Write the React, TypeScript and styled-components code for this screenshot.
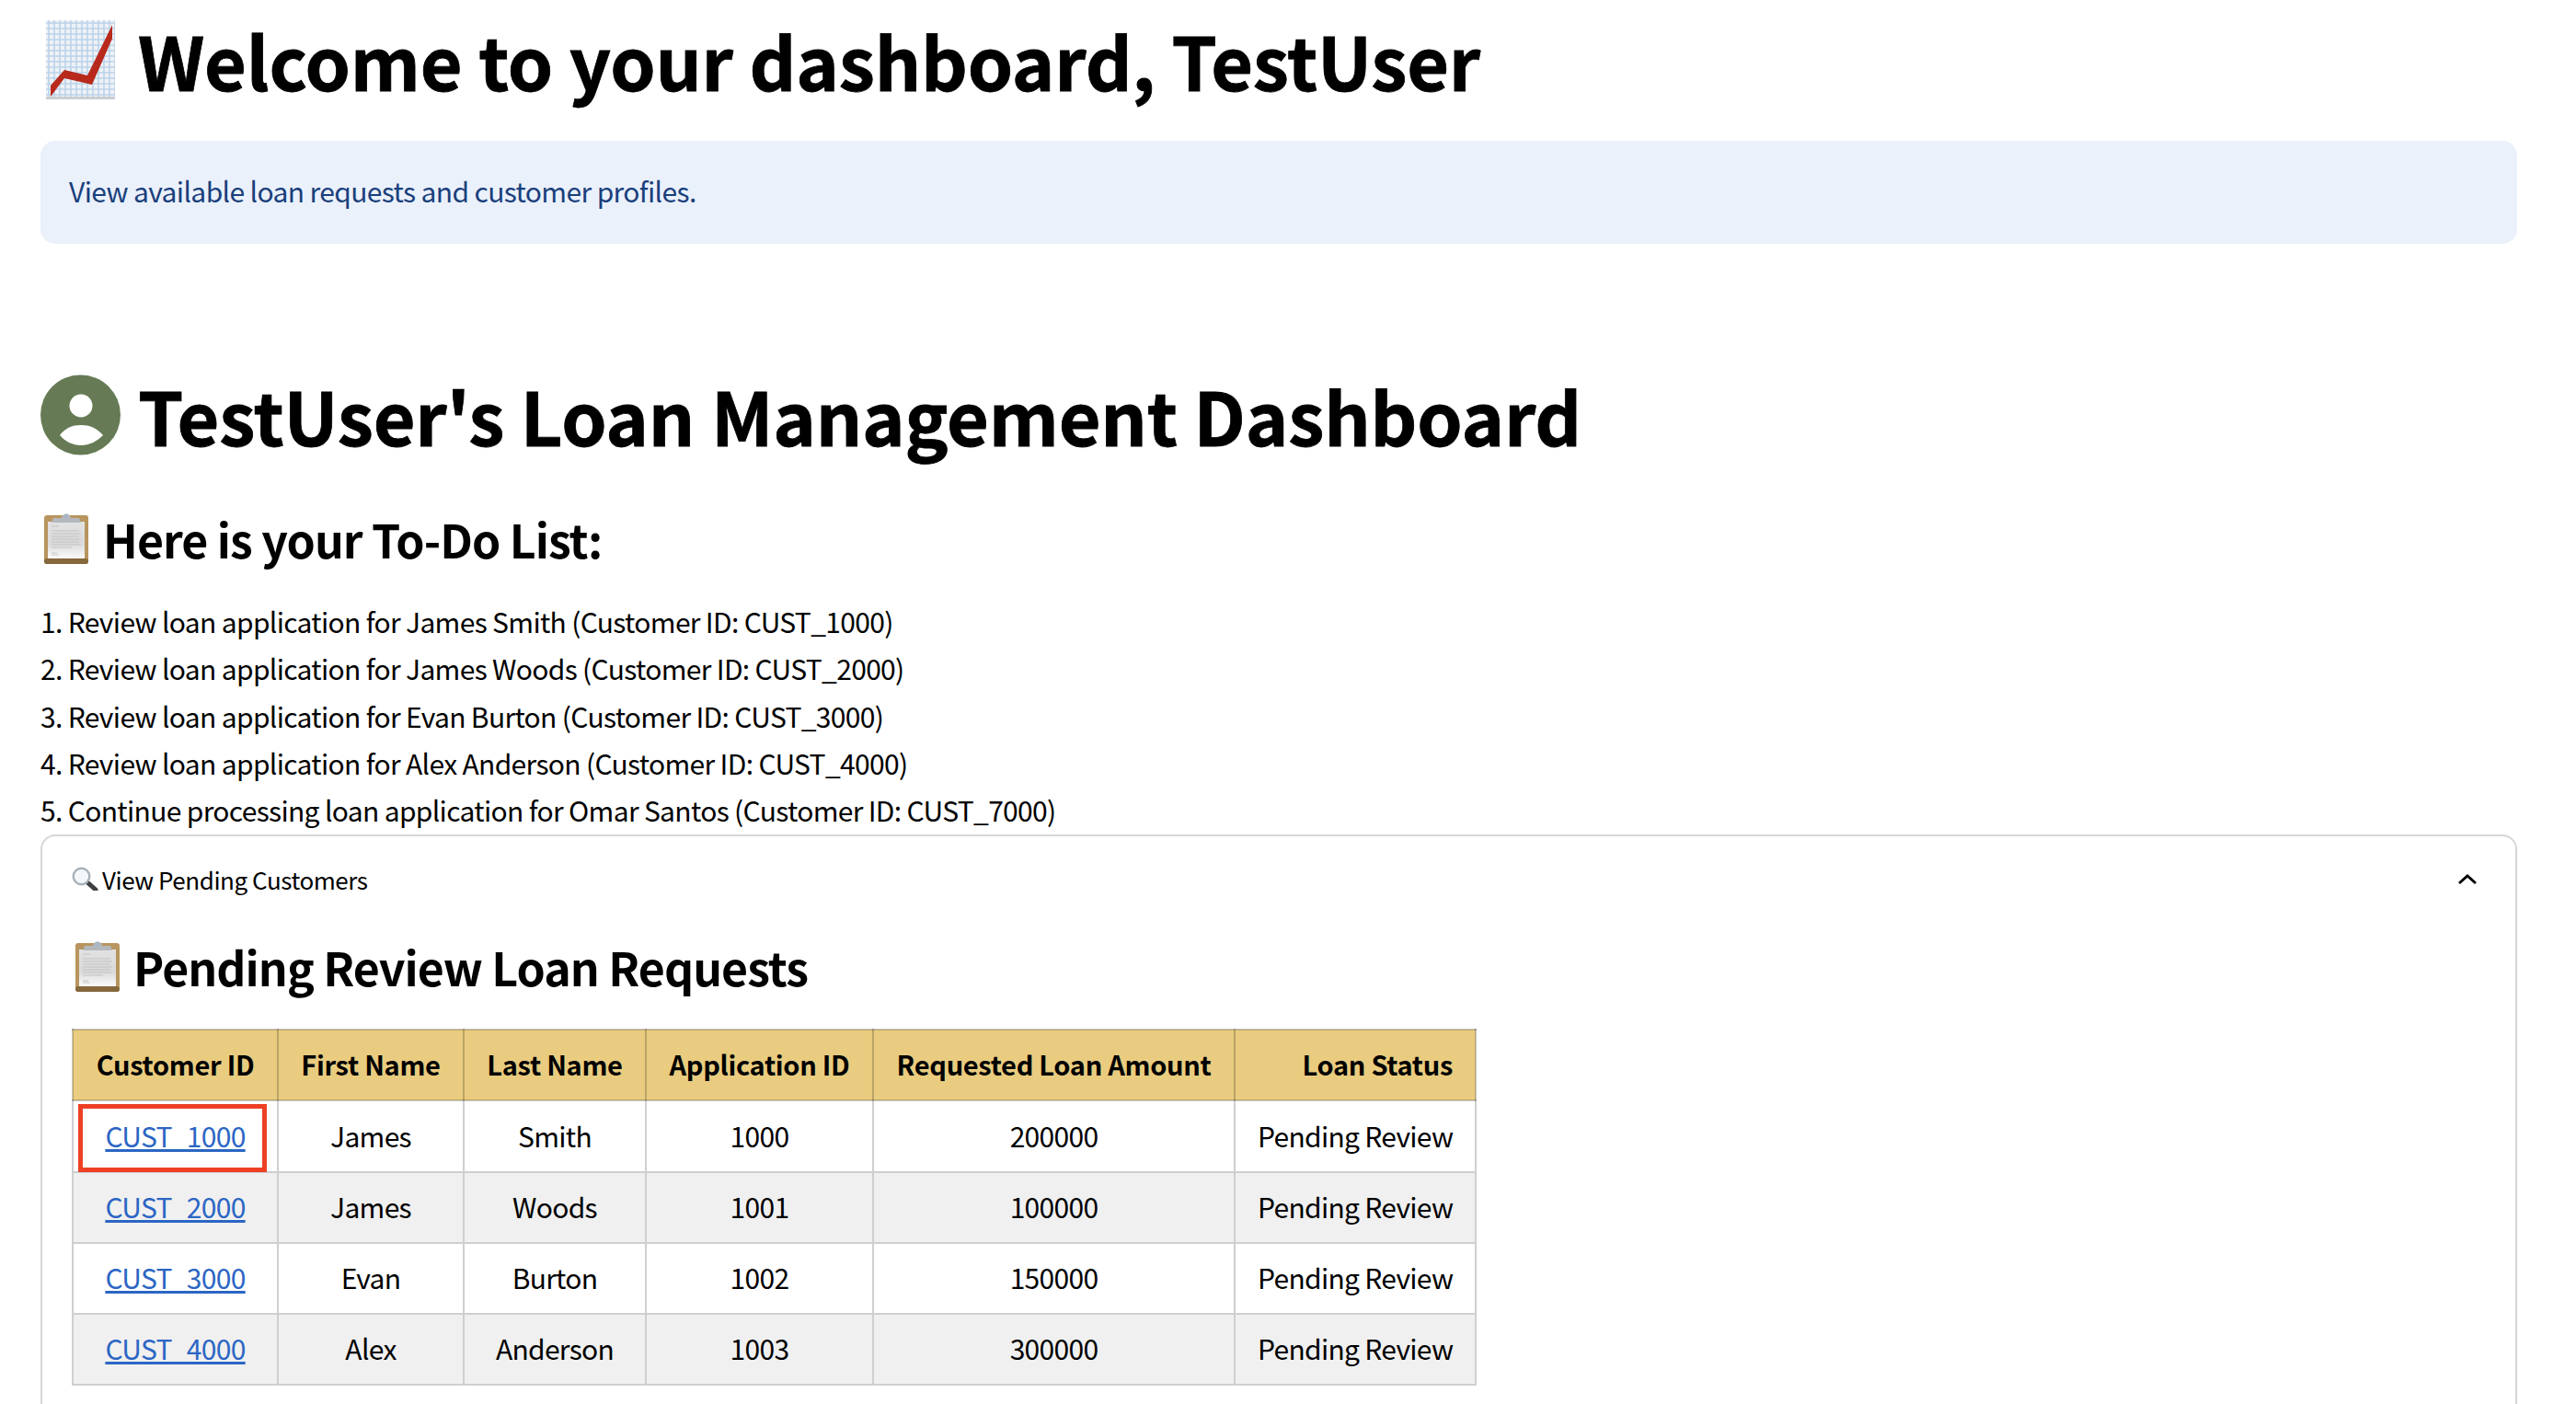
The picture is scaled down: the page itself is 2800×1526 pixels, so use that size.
import styled, { createGlobalStyle } from "styled-components";

const customers = [
  { id: "CUST_1000", first: "James", last: "Smith", app: 1000, amount: 200000 },
  { id: "CUST_2000", first: "James", last: "Woods", app: 1001, amount: 100000 },
  { id: "CUST_3000", first: "Evan", last: "Burton", app: 1002, amount: 150000 },
  { id: "CUST_4000", first: "Alex", last: "Anderson", app: 1003, amount: 300000 },
];

const todos = [
  "Review loan application for James Smith (Customer ID: CUST_1000)",
  "Review loan application for James Woods (Customer ID: CUST_2000)",
  "Review loan application for Evan Burton (Customer ID: CUST_3000)",
  "Review loan application for Alex Anderson (Customer ID: CUST_4000)",
  "Continue processing loan application for Omar Santos (Customer ID: CUST_7000)",
];

const GlobalStyle = createGlobalStyle`
  html, body {
    margin: 0;
    height: 1526px;
    overflow: hidden;
    background: #fff;
  }
  body {
    font-family: "Noto Sans CJK JP", "Noto Sans", sans-serif;
    color: #000;
  }
`;

const Page = styled.main`
  padding: 0 64px 0 44px;
`;

const Title = styled.h1<{ $top: number }>`
  display: flex;
  align-items: center;
  margin: ${(p) => p.$top}px 0 0;
  height: 88px;
  font-size: 79px;
  line-height: 88px;
  font-weight: 700;
  letter-spacing: -0.2px;
  -webkit-text-stroke: 0.8px #000;
  white-space: nowrap;
`;

const SubTitle = styled.h2<{ $top: number; $left: number }>`
  display: flex;
  align-items: center;
  margin: ${(p) => p.$top}px 0 0;
  padding-left: ${(p) => p.$left}px;
  height: 56px;
  font-size: 50px;
  line-height: 56px;
  font-weight: 700;
  letter-spacing: -0.95px;
  white-space: nowrap;
`;

const Notice = styled.div`
  display: flex;
  align-items: center;
  margin-top: 44px;
  height: 112px;
  box-sizing: border-box;
  padding: 0 0 4px 31px;
  border-radius: 16px;
  background: #eaf1fb;
  color: #1a3f7c;
  font-size: 30px;
  letter-spacing: -0.62px;
`;

const TodoList = styled.ol`
  list-style: none;
  margin: 37px 0 0;
  padding: 0;
  font-size: 30px;
  line-height: 51.3px;
  letter-spacing: -0.67px;
`;

const Expander = styled.section`
  margin-top: 1px;
  height: 800px;
  border: 2px solid #d6d6d8;
  border-radius: 16px;
  padding: 0 32px;
`;

const ExpanderHead = styled.div`
  display: flex;
  align-items: center;
  height: 92px;
  padding-bottom: 4px;
  font-size: 26px;
  letter-spacing: -0.45px;
`;

const Chevron = styled.svg`
  margin-left: auto;
  margin-right: 9px;
`;

const Table = styled.table`
  border-collapse: collapse;
  table-layout: fixed;
  margin-top: 40px;
  width: 1525px;
  font-size: 30px;
  letter-spacing: -0.7px;

  tbody tr:first-child td {
    height: 78px;
  }
`;

const HeadCell = styled.th<{ $width: number; $align?: string }>`
  width: ${(p) => p.$width}px;
  height: 77px;
  padding: 0 24px 3px;
  box-sizing: border-box;
  background: #e9cc7f;
  border: 2px solid rgba(0, 0, 0, 0.2);
  font-weight: 700;
  font-size: 29px;
  letter-spacing: -0.3px;
  text-align: ${(p) => p.$align || "center"};
  white-space: nowrap;
`;

const Row = styled.tr<{ $striped: boolean }>`
  background: ${(p) => (p.$striped ? "#f0f0f0" : "#fff")};
`;

const Cell = styled.td<{ $align?: string }>`
  position: relative;
  height: 77px;
  padding: 0 24px 3px;
  box-sizing: border-box;
  border: 2px solid #cfcfd1;
  text-align: ${(p) => p.$align || "center"};
  white-space: nowrap;
`;

const CustomerLink = styled.a`
  color: #2b66c4;
  text-decoration: underline;
`;

const Highlight = styled.span`
  position: absolute;
  left: 5px;
  top: 3px;
  width: 205px;
  height: 74px;
  box-sizing: border-box;
  border: 5px solid #ee4024;
`;

const ChartEmoji = () => (
  <svg width="75" height="86" viewBox="0 0 75 86" style={{ margin: "0 25px 0 6px", flex: "none" }}>
    <defs>
      <pattern id="graph" width="6" height="6" patternUnits="userSpaceOnUse">
        <rect width="6" height="6" fill="#eef2f6" />
        <path d="M3 0V6M0 3H6" stroke="#bcd3ea" strokeWidth="1.6" />
      </pattern>
    </defs>
    <rect width="75" height="86" fill="url(#graph)" />
    <rect y="83" width="75" height="3" fill="#c9ced4" />
    <path d="M72 5L72 20L50 70L20 63L5 83L5 71L20 54L45 60Z" fill="#b8291c" />
  </svg>
);

const UserIcon = () => (
  <svg width="87" height="88" viewBox="0 0 87 88" style={{ marginRight: 19, flex: "none" }}>
    <circle cx="43.5" cy="44" r="43.5" fill="#667b55" />
    <circle cx="44" cy="34" r="12.5" fill="#fff" />
    <path d="M21 66C27 58 35 55 44 55C53 55 61 58 68 66C61 73 53 77 44 77C35 77 27 73 21 66Z" fill="#fff" />
  </svg>
);

const ClipboardEmoji = ({ id, gap }: { id: string; gap: number }) => (
  <svg width="48" height="56" viewBox="0 0 48 56" style={{ marginRight: gap, flex: "none" }}>
    <defs>
      <linearGradient id={id} x1="0" y1="0" x2="0" y2="1">
        <stop offset="0" stopColor="#e2e2e2" />
        <stop offset="0.6" stopColor="#dadada" />
        <stop offset="1" stopColor="#fbfbfb" />
      </linearGradient>
    </defs>
    <rect y="3" width="48" height="53" rx="3" fill="#b8955e" />
    <rect y="50" width="48" height="6" rx="3" fill="#86683c" />
    <rect x="4" y="10" width="40" height="40" fill={`url(#${id})`} />
    <path
      d="M8 15H16M8 20H38M8 23H40M8 26H38M8 29H40M8 32H38M8 35H40M8 38H30M8 44H14M8 46H16"
      stroke="#b8b8b8"
      strokeWidth="0.7"
    />
    <path d="M8 11L10 6H19C20 0 28 0 29 6H38L40 11Z" fill="#b4b8bc" />
    <circle cx="24" cy="4" r="2" fill="none" stroke="#9fb4cc" strokeWidth="1.2" />
  </svg>
);

const MagnifierEmoji = () => (
  <svg width="29" height="26" viewBox="0 0 29 26" style={{ marginRight: 4, flex: "none" }}>
    <path d="M17 17L26 25" stroke="#3d3f42" strokeWidth="5" strokeLinecap="round" />
    <circle cx="10.5" cy="10.5" r="8.8" fill="#f4f7fa" stroke="#a9b2ba" strokeWidth="2.4" />
  </svg>
);

export default function App() {
  return (
    <Page>
      <GlobalStyle />
      <Title $top={21}>
        <ChartEmoji />
        Welcome to your dashboard, TestUser
      </Title>
      <Notice>View available loan requests and customer profiles.</Notice>
      <Title $top={142}>
        <UserIcon />
        TestUser's Loan Management Dashboard
      </Title>
      <SubTitle $top={62} $left={4}>
        <ClipboardEmoji id="clip-a" gap={16} />
        Here is your To-Do List:
      </SubTitle>
      <TodoList>
        {todos.map((todo, i) => (
          <li key={todo}>
            {i + 1}. {todo}
          </li>
        ))}
      </TodoList>
      <Expander>
        <ExpanderHead>
          <MagnifierEmoji />
          View Pending Customers
          <Chevron width="22" height="13" viewBox="0 0 22 13">
            <path d="M2 11L11 3L20 11" fill="none" stroke="#000" strokeWidth="3" />
          </Chevron>
        </ExpanderHead>
        <SubTitle $top={17} $left={4}>
          <ClipboardEmoji id="clip-b" gap={15} />
          Pending Review Loan Requests
        </SubTitle>
        <Table>
          <thead>
            <tr>
              <HeadCell $width={223}>Customer ID</HeadCell>
              <HeadCell $width={202}>First Name</HeadCell>
              <HeadCell $width={198}>Last Name</HeadCell>
              <HeadCell $width={247}>Application ID</HeadCell>
              <HeadCell $width={393}>Requested Loan Amount</HeadCell>
              <HeadCell $width={262} $align="right">
                Loan Status
              </HeadCell>
            </tr>
          </thead>
          <tbody>
            {customers.map((c, i) => (
              <Row key={c.id} $striped={i % 2 === 1}>
                <Cell>
                  {i === 0 && <Highlight />}
                  <CustomerLink href="#">{c.id}</CustomerLink>
                </Cell>
                <Cell>{c.first}</Cell>
                <Cell>{c.last}</Cell>
                <Cell>{c.app}</Cell>
                <Cell>{c.amount}</Cell>
                <Cell $align="right">Pending Review</Cell>
              </Row>
            ))}
          </tbody>
        </Table>
      </Expander>
    </Page>
  );
}
